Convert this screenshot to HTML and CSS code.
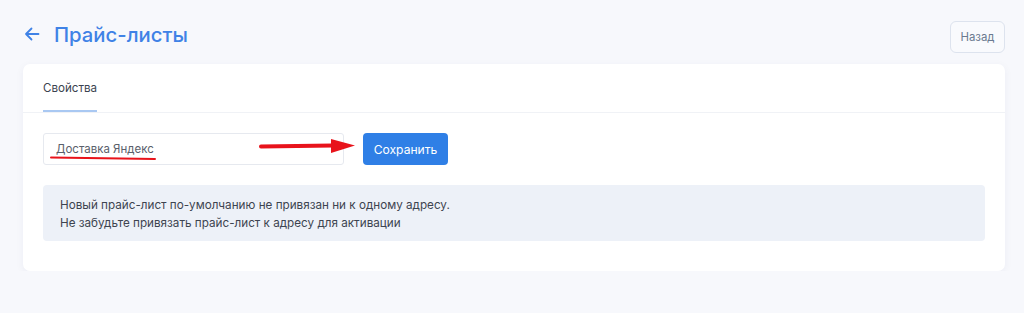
FILE: index.html
```html
<!DOCTYPE html>
<html lang="ru">
<head>
    <meta charset="UTF-8">
    <meta name="viewport" content="width=device-width, initial-scale=1.0">
    <title>Прайс-листы</title>
    <link rel="stylesheet" href="styles.css">
</head>
<body>

    <div class="page">
        <div class="page-header">
            <h1 class="page-title">
                <svg class="back-icon" width="16" height="16" viewBox="0 0 16 16">
                    <path d="M14.5 8H2 M7.5 2.5L2 8l5.5 5.5" fill="none" stroke="#3f82e6" stroke-width="1.8" stroke-linecap="round" stroke-linejoin="round"/>
                </svg>
                Прайс-листы
            </h1>
            <button class="btn-back">Назад</button>
        </div>

        <div class="card">
            <div class="tabs">
                <div class="tab active">Свойства</div>
            </div>

            <div class="card-body">
                <div class="form-row">
                    <div class="input-wrap">
                        <input class="field" type="text" value="Доставка Яндекс">
                        <!-- annotation marks -->
                        <svg class="mark-line" width="108" height="6" viewBox="0 0 108 6">
                            <path d="M1 2.5 C30 3.2, 70 3.6, 105 4" fill="none" stroke="#e8131b" stroke-width="2" stroke-linecap="round"/>
                        </svg>
                        <svg class="mark-arrow" width="100" height="18" viewBox="0 0 100 18">
                            <path d="M2 9.5 L74 8.6" fill="none" stroke="#e8131b" stroke-width="4" stroke-linecap="round"/>
                            <path d="M72 2 L96 8.6 L72 16 Z" fill="#e8131b"/>
                        </svg>
                    </div>
                    <button class="btn-save">Сохранить</button>
                </div>

                <div class="info">
                    Новый прайс-лист по-умолчанию не привязан ни к одному адресу.<br>
                    Не забудьте привязать прайс-лист к адресу для активации
                </div>
            </div>
        </div>
    </div>

</body>
</html>
```

FILE: styles.css
```css
/* Basic Reset */
* {
    margin: 0;
    padding: 0;
    box-sizing: border-box;
}

body {
    font-family: 'Inter', 'Noto Sans', sans-serif;
    background: #f7f8fc;
    color: #3b4350;
}

.page {
    padding: 21px 19px 0 23px;
}

/* Header */
.page-header {
    display: flex;
    justify-content: space-between;
    align-items: center;
    height: 32px;
}

.page-title {
    display: flex;
    align-items: center;
    gap: 14px;
    font-size: 20.3px;
    font-weight: 500;
    color: #3f82e6;
    padding-left: 1px;
    margin-bottom: 6px;
}

.btn-back {
    width: 55px;
    height: 32px;
    background: #f9fafd;
    border: 1px solid #dde3ee;
    border-radius: 6px;
    font-family: inherit;
    font-size: 11.4px;
    color: #6b7a90;
}

/* Card */
.card {
    margin-top: 11px;
    background: #fff;
    border-radius: 7px;
    box-shadow: 0 2px 8px rgba(30, 45, 90, 0.05);
}

.tabs {
    display: flex;
    padding: 0 20px;
    height: 49px;
    border-bottom: 1px solid #f0f2f6;
}

.tab {
    display: flex;
    align-items: center;
    font-size: 11.6px;
    color: #3b4350;
    padding-top: 1px;
}

.tab.active {
    border-bottom: 2px solid #a9c8f2;
}

.card-body {
    padding: 20px 20px 30px;
}

.form-row {
    display: flex;
    gap: 19px;
}

.input-wrap {
    position: relative;
}

.field {
    width: 301px;
    height: 32px;
    border: 1px solid #e6e9ef;
    border-radius: 3px;
    padding: 0 12px;
    font-family: inherit;
    font-size: 11.5px;
    color: #5a606b;
    outline: none;
}

.mark-line {
    position: absolute;
    left: 7px;
    top: 22px;
}

.mark-arrow {
    position: absolute;
    left: 216px;
    top: 4px;
}

.btn-save {
    width: 85px;
    height: 32px;
    background: #2f7fe6;
    border: none;
    border-radius: 4px;
    font-family: inherit;
    font-size: 12.1px;
    color: #fff;
}

.info {
    margin-top: 20px;
    background: #edf1f8;
    border-radius: 4px;
    padding: 11px 17px 9px;
    font-size: 11.7px;
    line-height: 18px;
    color: #3d4450;
}
```
